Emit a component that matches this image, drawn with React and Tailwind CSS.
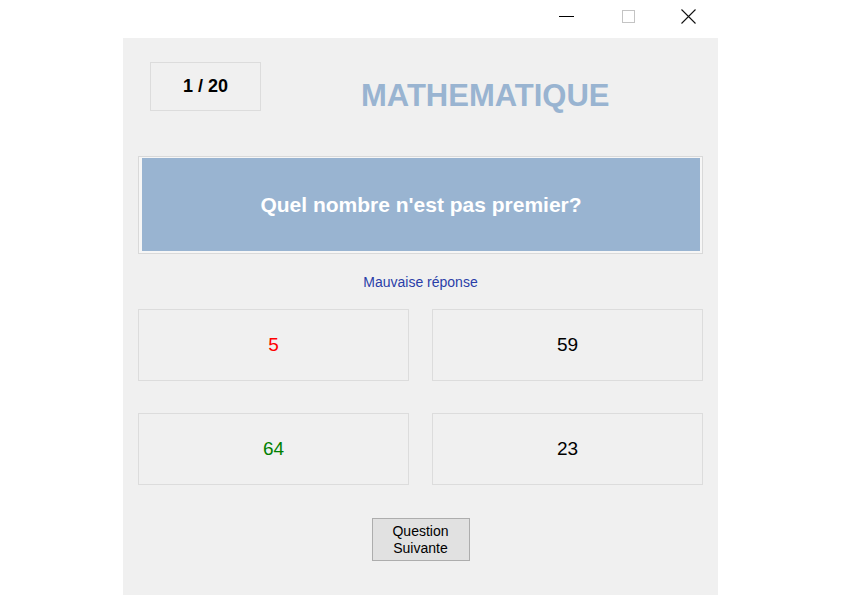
const ANSWERS = [
  { value: '5', color: 'text-[#ff0000]' },
  { value: '59', color: 'text-black' },
  { value: '64', color: 'text-[#008000]' },
  { value: '23', color: 'text-black' },
];

const TitleBar = () => (
  <div className="h-[38px] flex justify-end bg-white">
    {/* minimise */}
    <div className="w-[60px] flex items-center justify-center">
      <div className="w-[15px] h-px bg-black mt-[-6px] ml-[-3px]" />
    </div>
    {/* maximise (disabled) */}
    <div className="w-[60px] flex items-center justify-center">
      <div className="w-[13px] h-[13px] border border-[#c4c4c4] mt-[-6px]" />
    </div>
    {/* close */}
    <div className="w-[60px] flex items-center justify-center">
      <svg width="15" height="15" viewBox="0 0 15 15" className="mt-[-6px]">
        <path d="M0.5 0.5 L14.5 14.5 M14.5 0.5 L0.5 14.5" stroke="#111" strokeWidth="1.1" fill="none" />
      </svg>
    </div>
  </div>
);

export default function App() {
  return (
    <div className="w-[842px] h-[595px] bg-white flex pl-[123px] overflow-hidden font-['Liberation_Sans',Arial,sans-serif]">
      <div className="w-[595px] flex flex-col">
        <TitleBar />

        <div className="h-[557px] bg-[#f0f0f0] flex flex-col px-[15px]">
          {/* header */}
          <div className="flex items-start mt-[24px]">
            <div className="ml-[12px] w-[111px] h-[49px] border border-[#dcdcdc] flex items-center justify-center text-[18px] font-bold text-black">
              1 / 20
            </div>
            <h1 className="ml-[100px] mt-[18px] text-[31px] leading-[31px] font-bold text-[#99b4d1]">
              MATHEMATIQUE
            </h1>
          </div>

          {/* question */}
          <div className="mt-[45px] h-[98px] border border-[#d9d9d9] bg-[#f6f6f6] pt-px pl-[3px] pr-[2px] pb-[2px]">
            <div className="h-full bg-[#99b4d1] flex items-center justify-center text-white text-[21px] font-bold">
              Quel nombre n'est pas premier?
            </div>
          </div>

          <p className="mt-[20px] text-center text-[14px] leading-[16px] text-[#2a3ea8]">
            Mauvaise réponse
          </p>

          {/* answers */}
          <div className="mt-[19px] grid grid-cols-2 gap-x-[23px] gap-y-[32px]">
            {ANSWERS.map((a) => (
              <div
                key={a.value}
                className={`h-[72px] border border-[#dcdcdc] flex items-center justify-center text-[19px] ${a.color}`}
              >
                {a.value}
              </div>
            ))}
          </div>

          <div className="mt-[33px] flex justify-center">
            <button className="w-[98px] h-[43px] border border-[#adadad] bg-[#e1e1e1] text-[14px] leading-[17px] text-black">
              Question
              <br />
              Suivante
            </button>
          </div>
        </div>
      </div>
    </div>
  );
}
